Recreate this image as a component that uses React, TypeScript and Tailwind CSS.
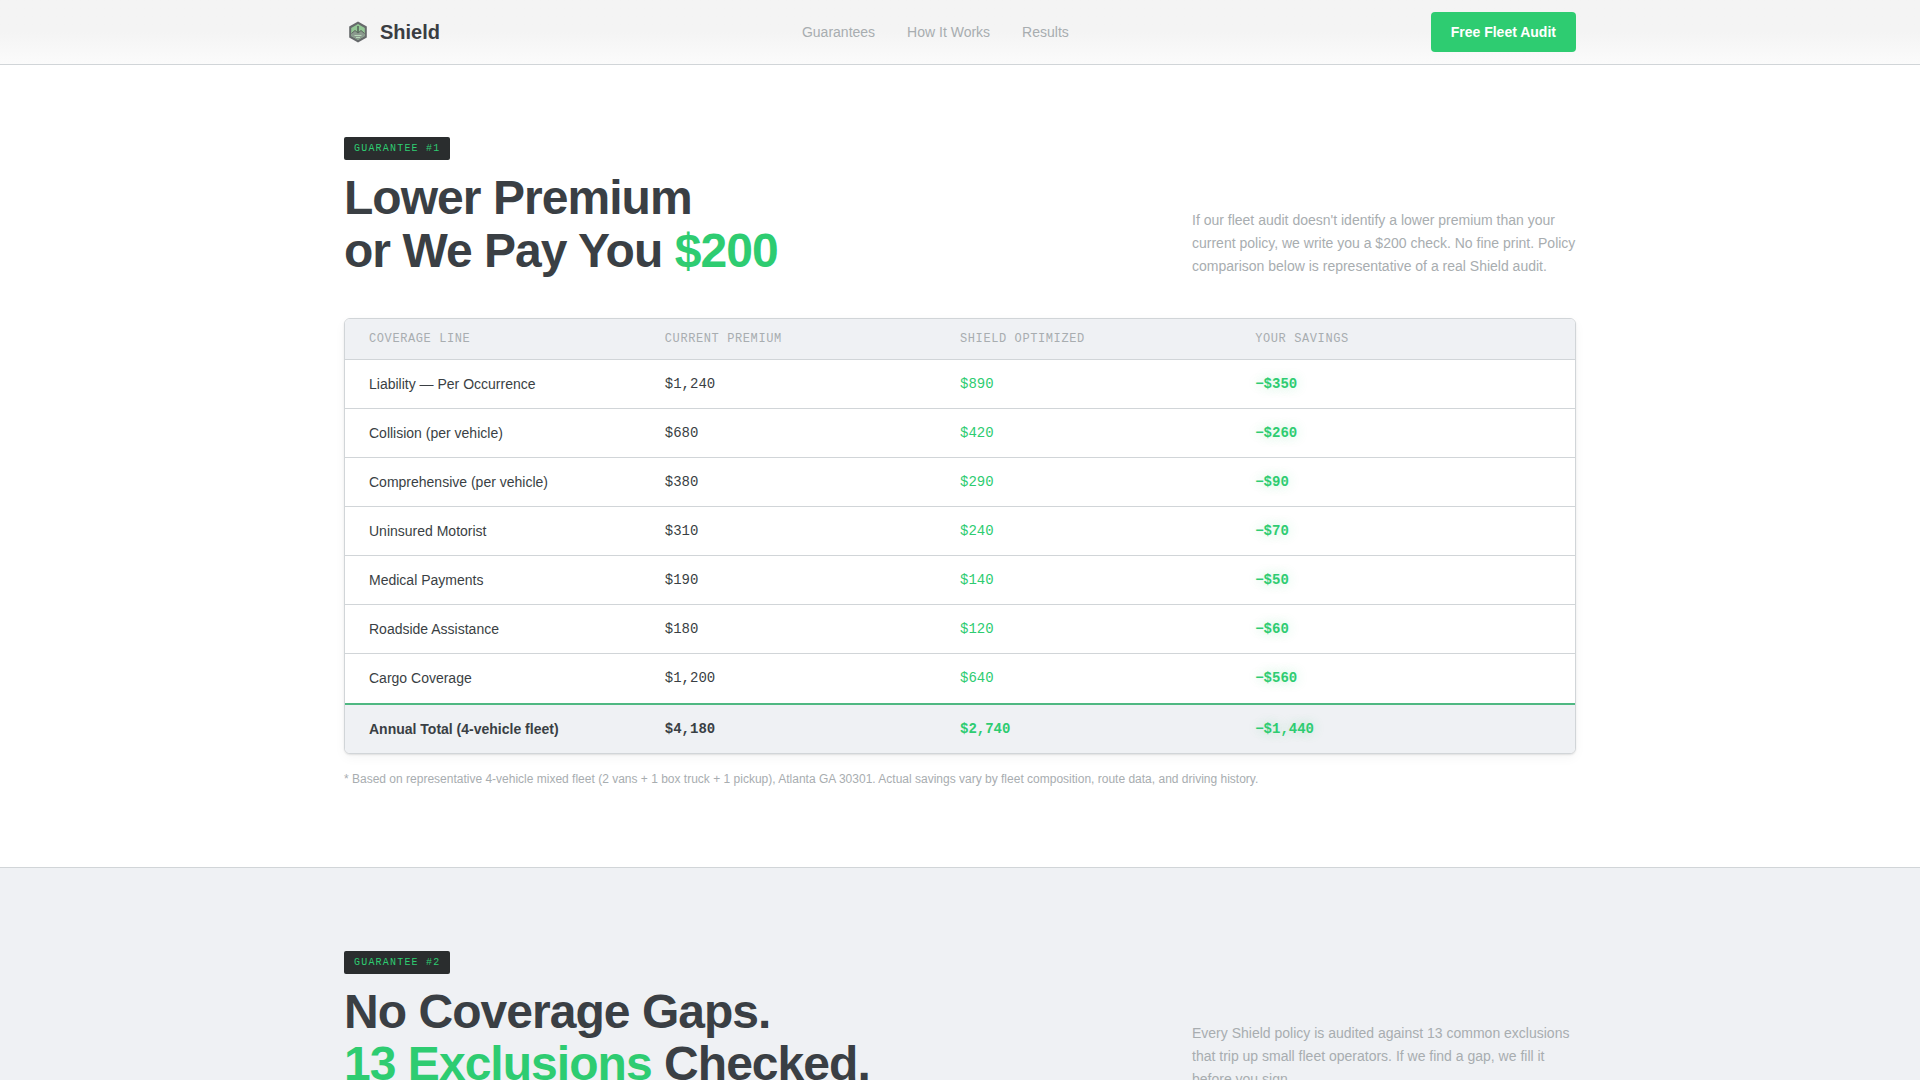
const navLinks = [
  { label: "Guarantees", href: "#guarantees" },
  { label: "How It Works", href: "#how-it-works" },
  { label: "Results", href: "#results" },
];

const coverage = [
  { line: "Liability — Per Occurrence", current: "$1,240", optimized: "$890", savings: "−$350" },
  { line: "Collision (per vehicle)", current: "$680", optimized: "$420", savings: "−$260" },
  { line: "Comprehensive (per vehicle)", current: "$380", optimized: "$290", savings: "−$90" },
  { line: "Uninsured Motorist", current: "$310", optimized: "$240", savings: "−$70" },
  { line: "Medical Payments", current: "$190", optimized: "$140", savings: "−$50" },
  { line: "Roadside Assistance", current: "$180", optimized: "$120", savings: "−$60" },
  { line: "Cargo Coverage", current: "$1,200", optimized: "$640", savings: "−$560" },
];

const Logo = () => (
  <svg className="w-7 h-7" viewBox="0 0 28 28" fill="none" aria-hidden="true">
    <path d="M14 3.5L22.8 8.6V19.4L14 24.5L5.2 19.4V8.6Z" fill="#66696b" />
    <path d="M14 6L20.8 9.9V18.1L14 22L7.2 18.1V9.9Z" fill="#93c795" />
    <path d="M7.2 15.5L11 12.5L14 15L17 12.5L20.8 15.5V18.1L14 22L7.2 18.1Z" fill="#8b9a8e" />
    <path d="M14 8V14" stroke="#4f5a53" strokeWidth="1.4" />
    <path d="M7.5 15.5L11 12.5L14 15L17 12.5L20.5 15.5" stroke="#5a645d" strokeWidth="1" />
    <path d="M10.5 17.5H17.5M12 19.5H16" stroke="#b9d8ba" strokeWidth="1" />
  </svg>
);

const Navbar = () => (
  <header className="border-b border-[#d1d5d8] bg-gradient-to-b from-[#f4f4f4] from-50% to-[#fbfbfb]">
    <div className="max-w-7xl mx-auto px-6 h-16 flex items-center justify-between">
      <a href="#top" className="flex items-center gap-2 text-xl font-bold text-[#3a3d42]">
        <Logo />
        Shield
      </a>
      <nav className="flex items-center gap-8">
        {navLinks.map((link) => (
          <a key={link.href} href={link.href} className="text-sm text-[#a8adb0]">
            {link.label}
          </a>
        ))}
      </nav>
      <button
        type="button"
        className="h-10 px-5 rounded bg-[#2ecc71] text-sm font-bold text-white"
      >
        Free Fleet Audit
      </button>
    </div>
  </header>
);

interface SectionHeadProps {
  badge: string;
  title: React.ReactNode;
  text: string;
}

const SectionHead = ({ badge, title, text }: SectionHeadProps) => (
  <div className="flex items-end justify-between gap-12">
    <div>
      <span className="block w-fit px-2.5 py-1 rounded-xs bg-[#2a2d2e] font-['Liberation_Mono',monospace] text-[10px] leading-[15px] tracking-[0.12em] text-[#2ecc71]">
        {badge}
      </span>
      <h2 className="mt-3 text-5xl leading-[1.1] font-bold tracking-[-0.02em] text-[#3a3f44]">
        {title}
      </h2>
    </div>
    <p className="w-96 text-sm leading-[23px] text-[#a8adb0]">{text}</p>
  </div>
);

const CoverageTable = () => (
  <div className="mt-10 rounded-md border border-[#d1d5d8] overflow-hidden bg-white shadow-[0_1px_2px_rgba(0,0,0,0.1),0_4px_12px_rgba(0,0,0,0.04)]">
    <table className="w-full table-fixed border-separate border-spacing-0 text-left text-sm text-[#3a3f44]">
      <thead className="bg-[#eff1f4] font-['Liberation_Mono',monospace] text-xs text-[#a8adb0]">
        <tr className="*:h-[41px] *:border-b *:border-[#d1d5d8] *:font-normal *:tracking-[0.05em]">
          <th className="w-[26%] pl-6">COVERAGE LINE</th>
          <th className="w-[24%]">CURRENT PREMIUM</th>
          <th className="w-[24%]">SHIELD OPTIMIZED</th>
          <th>YOUR SAVINGS</th>
        </tr>
      </thead>
      <tbody>
        {coverage.map((row) => (
          <tr
            key={row.line}
            className="*:h-[49px] *:border-b *:border-[#d1d5d8] last:*:border-b-0"
          >
            <td className="pl-6">{row.line}</td>
            <td className="font-['Liberation_Mono',monospace]">{row.current}</td>
            <td className="font-['Liberation_Mono',monospace] text-[#2ecc71]">{row.optimized}</td>
            <td className="font-['Liberation_Mono',monospace] font-bold text-[#2ecc71] text-shadow-[0_0_12px_rgba(46,204,113,0.3)]">
              {row.savings}
            </td>
          </tr>
        ))}
      </tbody>
      <tfoot className="bg-[#eff1f4] font-bold">
        <tr className="*:h-[50px] *:border-t-2 *:border-[#4fb882]">
          <td className="pl-6">Annual Total (4-vehicle fleet)</td>
          <td className="font-['Liberation_Mono',monospace]">$4,180</td>
          <td className="font-['Liberation_Mono',monospace] text-[#2ecc71]">$2,740</td>
          <td className="font-['Liberation_Mono',monospace] text-[#2ecc71] text-shadow-[0_0_12px_rgba(46,204,113,0.3)]">
            −$1,440
          </td>
        </tr>
      </tfoot>
    </table>
  </div>
);

const App = () => {
  return (
    <div
      id="top"
      className="h-screen overflow-hidden bg-white font-['Liberation_Sans',Arial,sans-serif]"
    >
      <Navbar />
      <main>
        <section id="guarantees" className="pt-18 pb-[79px]">
          <div className="max-w-7xl mx-auto px-6">
            <SectionHead
              badge="GUARANTEE #1"
              title={
                <>
                  Lower Premium
                  <br />
                  or We Pay You <span className="text-[#2ecc71]">$200</span>
                </>
              }
              text="If our fleet audit doesn't identify a lower premium than your current policy, we write you a $200 check. No fine print. Policy comparison below is representative of a real Shield audit."
            />
            <CoverageTable />
            <p className="mt-4 text-xs leading-[18px] text-[#a8adb0]">
              * Based on representative 4-vehicle mixed fleet (2 vans + 1 box truck + 1 pickup),
              Atlanta GA 30301. Actual savings vary by fleet composition, route data, and driving
              history.
            </p>
          </div>
        </section>

        <section className="border-t border-[#d1d5d8] bg-[#eff1f4] pt-[83px] pb-20">
          <div className="max-w-7xl mx-auto px-6">
            <SectionHead
              badge="GUARANTEE #2"
              title={
                <>
                  No Coverage Gaps.
                  <br />
                  <span className="text-[#2ecc71]">13 Exclusions</span> Checked.
                </>
              }
              text="Every Shield policy is audited against 13 common exclusions that trip up small fleet operators. If we find a gap, we fill it before you sign."
            />
          </div>
        </section>
      </main>
    </div>
  );
};

export default App;
